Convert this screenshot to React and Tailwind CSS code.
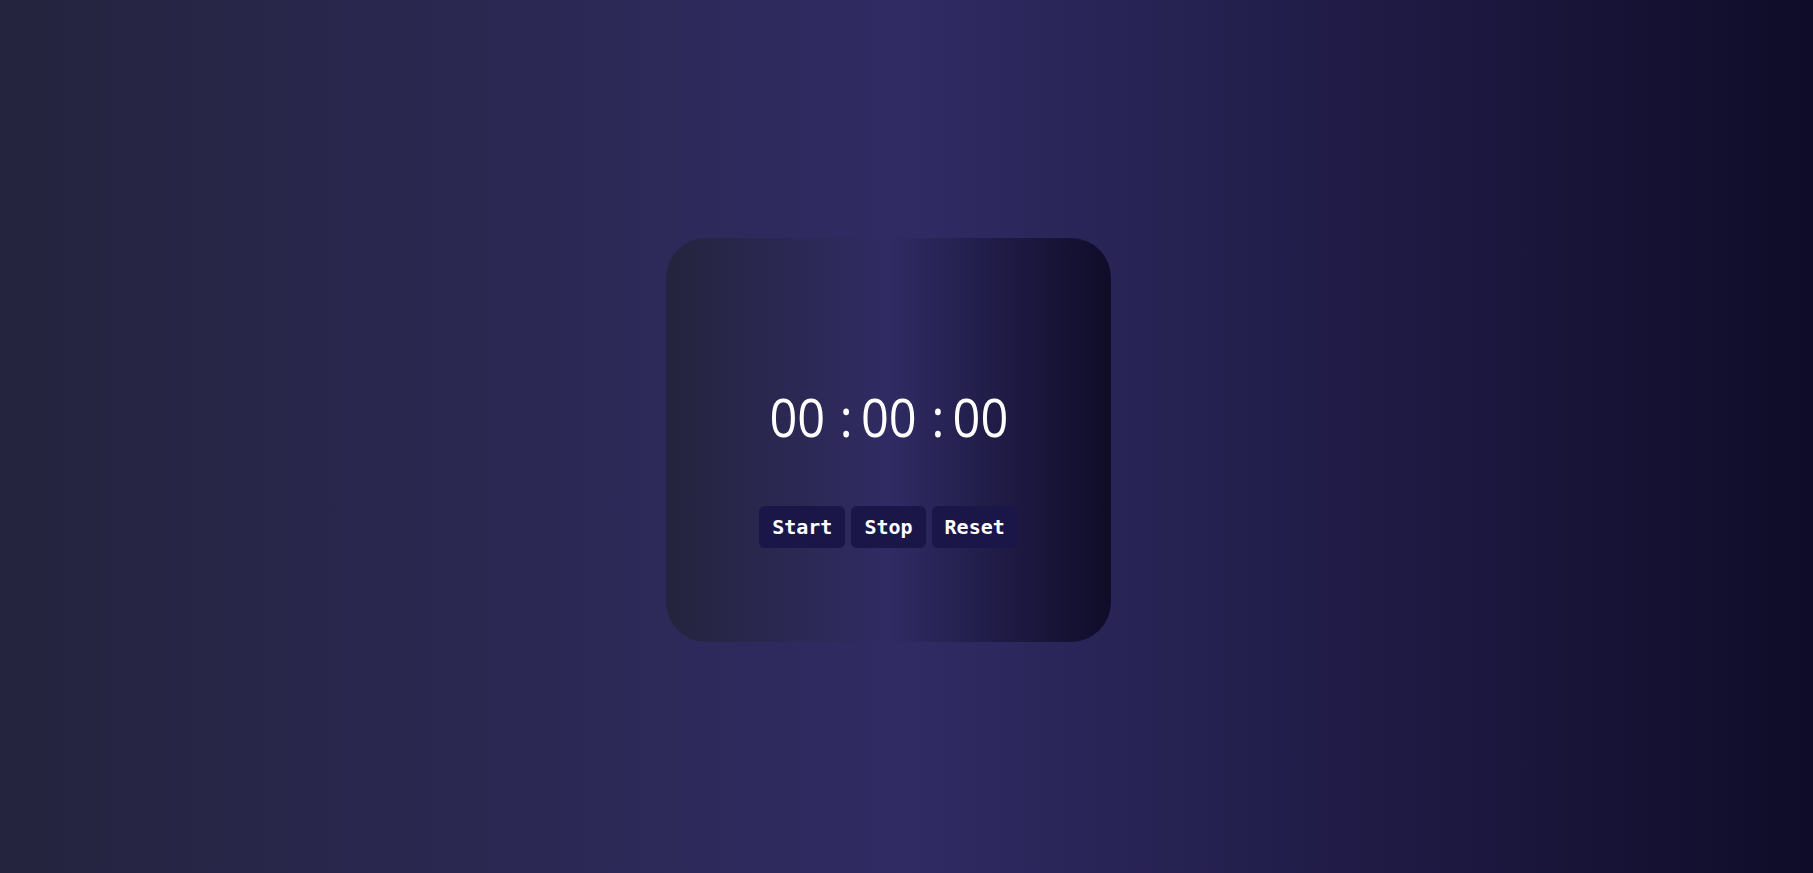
import { useState, useEffect, useRef } from 'react';

const pad = (n) => String(n).padStart(2, '0');

export default function App() {
  const [time, setTime] = useState(0);
  const [running, setRunning] = useState(false);
  const timerRef = useRef(null);

  useEffect(() => {
    if (running) {
      timerRef.current = setInterval(() => setTime(t => t + 1), 10);
    }
    return () => clearInterval(timerRef.current);
  }, [running]);

  const minutes = pad(Math.floor(time / 6000) % 60);
  const seconds = pad(Math.floor(time / 100) % 60);
  const centis = pad(time % 100);

  const btn =
    "h-[42px] px-[13px] rounded-[6px] bg-[#1b1648] text-white text-[20px] font-bold font-['DejaVu_Sans_Mono',monospace] flex items-center justify-center";

  return (
    <div className="h-screen w-full bg-[linear-gradient(to_right,#24243e,#302b63,#0f0c29)] flex items-center justify-center pt-[7px] pr-[36px]">
      {/* Card */}
      <div className="w-[445px] h-[404px] rounded-[40px] bg-[linear-gradient(to_right,#24243e,#302b63,#0f0c29)] flex flex-col items-center pt-[152px]">
        {/* Timer */}
        <div className="flex items-center text-white text-[53px] font-medium leading-none font-['Open_Sans',sans-serif] h-[53px] scale-x-[0.92]">
          <span>{minutes}</span>
          <span className="ml-[16px] mr-[9px]">:</span>
          <span>{seconds}</span>
          <span className="ml-[16px] mr-[9px]">:</span>
          <span>{centis}</span>
        </div>

        {/* Buttons */}
        <div className="flex gap-[6px] mt-[63px]">
          <button className={btn} onClick={() => setRunning(true)}>Start</button>
          <button className={btn} onClick={() => setRunning(false)}>Stop</button>
          <button className={btn} onClick={() => { setRunning(false); setTime(0); }}>Reset</button>
        </div>
      </div>
    </div>
  );
}
